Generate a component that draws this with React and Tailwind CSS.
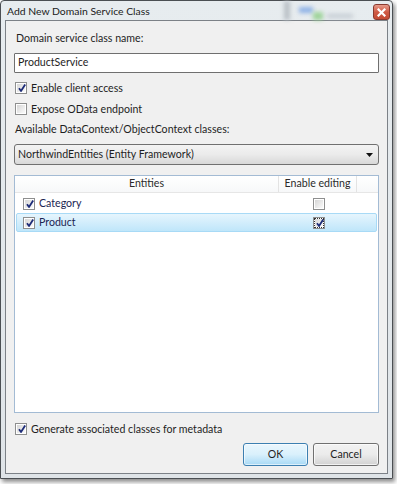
import React from 'react';

const FONT = { fontFamily: 'Lato, "Noto Sans", sans-serif' };

function Check({ checked, focus }) {
  return (
    <span className="relative inline-flex shrink-0 w-[12px] h-[12px] border border-[#8e8f8f] bg-white p-[1px]">
      <span
        className={`w-full h-full bg-linear-to-br from-[#d6d6d6] to-[#fbfbfb] ${
          focus ? 'outline-1 outline-dotted outline-[#333]' : ''
        }`}
      />
      {checked && (
        <svg className="absolute left-[1px] top-[0px]" width="10" height="10" viewBox="0 0 10 10">
          <path d="M2 5.2 L4 8 L8.2 1.6" stroke="#1d2c78" strokeWidth="1.8" fill="none" strokeLinejoin="round" />
        </svg>
      )}
    </span>
  );
}

function CheckRow({ checked, label, className = '' }) {
  return (
    <div className={`flex items-center h-[16px] gap-[4px] pl-[1px] ${className}`}>
      <Check checked={checked} />
      <span className="text-[10.6px] text-[#1e1e1e] leading-none">{label}</span>
    </div>
  );
}

export default function App() {
  return (
    <div className="w-[397px] h-[484px] bg-white overflow-hidden relative" style={FONT}>
      {/* window */}
      <div className="w-[393px] h-[479px] border border-[#4b4f53] bg-linear-to-b from-[#e7ecef] to-[#dfe4e8] shadow-[2px_3px_4px_rgba(0,0,0,0.45)] flex flex-col rounded-t-[4px]">
        {/* title bar */}
        <div className="relative h-[19px] flex items-center pl-[6px]">
          <span className="text-[10.4px] text-[#1a1a1a] leading-none pt-[2px]">Add New Domain Service Class</span>
          <div className="absolute left-[283px] top-0 w-[6px] h-[19px] bg-[#b9c0c6] blur-[2px]" />
          <div className="absolute left-[298px] top-[6px] w-[14px] h-[6px] bg-[#8fb2e6] blur-[2px]" />
          <div className="absolute left-[312px] top-[11px] w-[10px] h-[8px] bg-[#9ed39a] blur-[2px]" />
          <div className="absolute left-[326px] top-[13px] w-[26px] h-[4px] bg-[#c4cbd2] blur-[2px]" />
          <div className="absolute right-[2px] top-[3px] w-[17px] h-[16px] rounded-[3px] border border-[#8a3a2f] bg-linear-to-b from-[#e69a8a] via-[#cf5a45] to-[#c44a33] flex items-center justify-center">
            <svg width="9" height="9" viewBox="0 0 9 9">
              <path d="M1.5 1.5 L7.5 7.5 M7.5 1.5 L1.5 7.5" stroke="#fff" strokeWidth="2.2" strokeLinecap="square" />
            </svg>
          </div>
        </div>
        {/* client area */}
        <div className="mx-[4px] mb-[4px] flex-1 border border-[#7c8187] bg-[#f0f0f0] flex flex-col pl-[8px] pr-[8px] text-[10.6px] text-[#1e1e1e]">
          <div className="mt-[10px] h-[16px] flex items-center pl-[2px]">Domain service class name:</div>
          <div className="mt-[6px] h-[20px] border border-[#6f6f6f] rounded-[1px] bg-white flex items-center pl-[3px]">
            ProductService
          </div>
          <CheckRow checked label="Enable client access" className="mt-[7px]" />
          <CheckRow checked={false} label="Expose OData endpoint" className="mt-[5px]" />
          <div className="mt-[5px] h-[16px] flex items-center pl-[1px]">
            Available DataContext/ObjectContext classes:
          </div>
          <div className="mt-[6px] h-[21px] border border-[#707070] rounded-[3px] bg-linear-to-b from-[#f3f3f3] via-[#ebebeb] to-[#d8d8d8] flex items-center justify-between pl-[3px] pr-[5px]">
            <span>NorthwindEntities (Entity Framework)</span>
            <svg width="7" height="4" viewBox="0 0 7 4">
              <path d="M0 0 H7 L3.5 4 Z" fill="#111" />
            </svg>
          </div>
          {/* list view */}
          <div className="mt-[10px] h-[238px] border border-[#a3bbd4] bg-white flex flex-col">
            <div className="h-[17px] flex border-b border-[#e6e6e6] text-[#2b2b2b] bg-linear-to-b from-white to-[#f7f8f9] whitespace-nowrap">
              <div className="w-[264px] flex items-center justify-center border-r border-[#e3e3e3]">Entities</div>
              <div className="w-[78px] flex items-center justify-center border-r border-[#e3e3e3]">Enable editing</div>
              <div className="flex-1" />
            </div>
            <div className="mt-[1px] h-[19px] flex items-center px-[1px]">
              <div className="w-[263px] flex items-center gap-[4px] pl-[7px]">
                <Check checked />
                <span className="text-[#1b2552] leading-none">Category</span>
              </div>
              <div className="w-[78px] flex items-center justify-center pl-[1px]">
                <Check checked={false} />
              </div>
            </div>
            <div className="h-[19px] mx-[1px] flex items-center rounded-[2px] border border-[#a8daf6] bg-linear-to-b from-[#e6f5fd] to-[#bfe6fa]">
              <div className="w-[262px] flex items-center gap-[4px] pl-[6px]">
                <Check checked />
                <span className="text-[#1b2552] leading-none">Product</span>
              </div>
              <div className="w-[78px] flex items-center justify-center pl-[1px]">
                <Check checked focus />
              </div>
            </div>
          </div>
          <CheckRow checked label="Generate associated classes for metadata" className="mt-[8px]" />
          <div className="mt-[6px] flex justify-end gap-[5px]">
            <button className="w-[65px] h-[23px] rounded-[3px] border border-[#3c7fb1] bg-linear-to-b from-[#eaf6fd] via-[#d9f0fc] to-[#a7d9f5] shadow-[inset_0_0_0_1px_rgba(255,255,255,0.6)] text-[10.6px] text-[#1e1e1e]">
              OK
            </button>
            <button className="w-[66px] h-[23px] rounded-[3px] border border-[#707070] bg-linear-to-b from-[#f2f2f2] via-[#ebebeb] to-[#d2d2d2] shadow-[inset_0_0_0_1px_rgba(255,255,255,0.7)] text-[10.6px] text-[#1e1e1e]">
              Cancel
            </button>
          </div>
        </div>
      </div>
    </div>
  );
}
